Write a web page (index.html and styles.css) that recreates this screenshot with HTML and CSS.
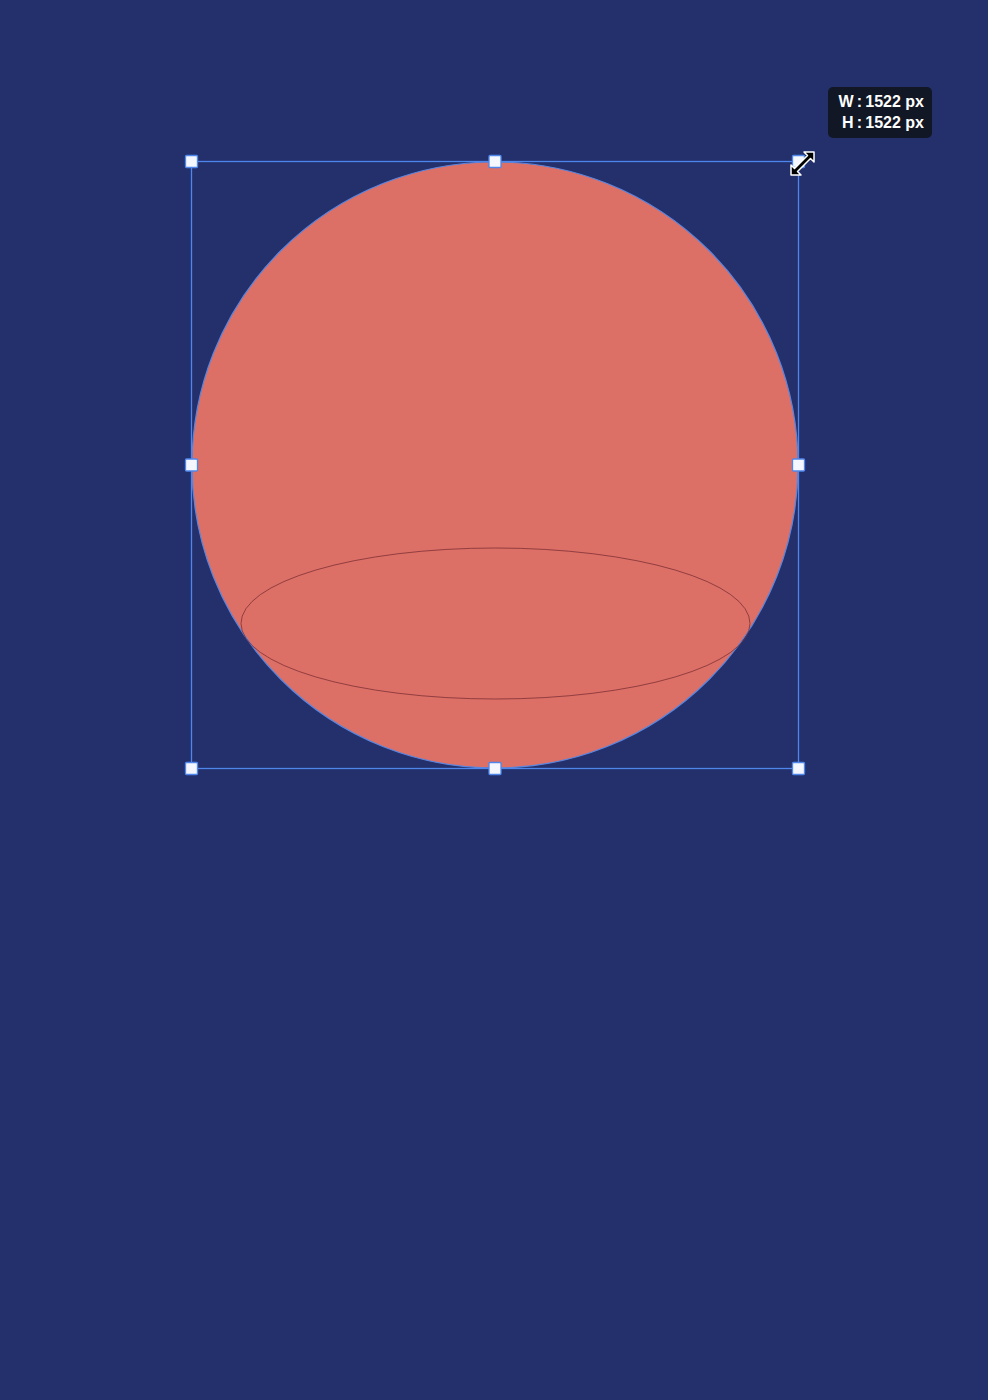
FILE: index.html
```html
<!DOCTYPE html>
<html>
<head>
<meta charset="utf-8">
<link rel="stylesheet" href="styles.css">
</head>
<body>
<div class="canvas">
  <svg class="art" width="988" height="1400" viewBox="0 0 988 1400" xmlns="http://www.w3.org/2000/svg">
    <circle cx="495" cy="465" r="303" fill="#dc6f66" stroke="#5a86e0" stroke-width="1.2"/>
    <ellipse cx="495.5" cy="623.5" rx="254.5" ry="75.5" fill="none" stroke="#7a2e33" stroke-width="0.9" opacity="0.85"/>
    <rect x="191.5" y="161.5" width="607" height="607" fill="none" stroke="#4f86ec" stroke-width="1.3"/>
    <g fill="#f4f7ff" stroke="#4f86ec" stroke-width="1.3">
      <rect x="185.5" y="155.5" width="12" height="12" rx="1"/>
      <rect x="489" y="155.5" width="12" height="12" rx="1"/>
      <rect x="792.5" y="155.5" width="12" height="12" rx="1"/>
      <rect x="185.5" y="459" width="12" height="12" rx="1"/>
      <rect x="792.5" y="459" width="12" height="12" rx="1"/>
      <rect x="185.5" y="762.5" width="12" height="12" rx="1"/>
      <rect x="489" y="762.5" width="12" height="12" rx="1"/>
      <rect x="792.5" y="762.5" width="12" height="12" rx="1"/>
    </g>
    <g class="cursor">
      <path d="M791 175 L791 165 L794.5 168.5 L807.5 155.5 L804 152 L814 152 L814 162 L810.5 158.5 L797.5 171.5 L801 175 Z" fill="#000" stroke="#fff" stroke-width="1.5" stroke-linejoin="round"/>
    </g>
  </svg>
  <div class="tooltip">
    <div class="tip-line">W&#8201;:&#8201;1522 px</div>
    <div class="tip-line">H&#8201;:&#8201;1522 px</div>
  </div>
</div>
</body>
</html>
```
FILE: styles.css
```css
html, body {
  margin: 0;
  padding: 0;
  background: #23306c;
}
.canvas {
  position: relative;
  width: 988px;
  height: 1400px;
  background: #23306c;
  overflow: hidden;
}
.art {
  display: block;
}
.tooltip {
  position: absolute;
  left: 828px;
  top: 87px;
  width: 104px;
  height: 51px;
  box-sizing: border-box;
  padding: 4px 8px 0 0;
  background: #121726;
  border-radius: 5px;
  display: flex;
  flex-direction: column;
  align-items: flex-end;
  color: #ffffff;
  font-family: "Liberation Sans", Arial, sans-serif;
  font-weight: bold;
  font-size: 16px;
  line-height: 21px;
}
.tip-line {
  white-space: nowrap;
}
```
